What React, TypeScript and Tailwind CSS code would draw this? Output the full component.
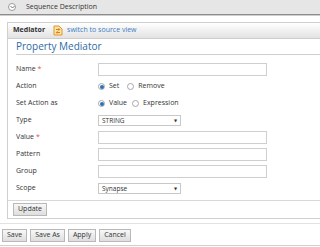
import React from 'react';

const font = { fontFamily: '"Open Sans", "DejaVu Sans", sans-serif' };

function Radio({ checked }: { checked?: boolean }) {
  return (
    <span className="inline-flex h-[7px] w-[7px] items-center justify-center rounded-full border border-[#a8a8a8] bg-white">
      {checked && <span className="h-[4px] w-[4px] rounded-full bg-[#2f6fb8]" />}
    </span>
  );
}

function SwitchIcon() {
  return (
    <svg width="10" height="11" viewBox="0 0 10 11">
      <path d="M1 1h5l3 3v6H1z" fill="#fbe6a8" stroke="#e0962a" strokeWidth="1" />
      <path d="M3 4.5h3.5M5.5 3.2l1.3 1.3-1.3 1.3" stroke="#e07a1a" strokeWidth="1" fill="none" />
      <path d="M7 7.5H3.5M4.5 6.2L3.2 7.5l1.3 1.3" stroke="#e07a1a" strokeWidth="1" fill="none" />
    </svg>
  );
}

function Row({ label, req, children }: { label: string; req?: boolean; children: React.ReactNode }) {
  return (
    <div className="flex h-[17px] items-center">
      <div className="w-[82px] text-[7px] text-[#333]">
        {label}
        {req && <span className="ml-[2px] text-[#e0504a]">*</span>}
      </div>
      {children}
    </div>
  );
}

function TextBox() {
  return <div className="h-[13px] w-[169px] border border-[#cfcfcf] bg-white" />;
}

function Select({ value }: { value: string }) {
  return (
    <div className="flex h-[11px] w-[83px] items-center justify-between border border-[#c8c8c8] bg-white pl-[3px] pr-[3px] text-[6.5px] text-[#333]">
      <span>{value}</span>
      <span className="text-[4px] leading-none">▼</span>
    </div>
  );
}

function Btn({ label }: { label: string }) {
  return (
    <div className="flex h-[13px] items-center border border-[#b8b8b8] bg-gradient-to-b from-[#f8f8f8] to-[#dedede] px-[4px] text-[7px] text-[#333]">
      {label}
    </div>
  );
}

export default function App() {
  return (
    <div className="h-[247px] w-[320px] overflow-hidden bg-white leading-normal" style={font}>
      <div className="flex h-[15px] items-center gap-[6px] border-b border-[#8c8c8c] bg-[#e7e6e6] pl-[8px] text-[7px] text-[#333]">
        <span className="flex h-[8px] w-[8px] items-center justify-center rounded-full border border-[#9a9a9a] bg-white">
          <svg width="5" height="4" viewBox="0 0 5 4">
            <path d="M0.5 1l2 2 2-2" stroke="#666" strokeWidth="0.9" fill="none" />
          </svg>
        </span>
        <span className="ml-[4px]">Sequence Description</span>
      </div>
      <div className="h-[1px] bg-[#cfcfcf]" />

      <div className="ml-[7px] mt-[6px] border-b border-l border-t border-[#d0d0d0]">
        <div className="flex h-[16px] items-center gap-[4px] border-b border-[#cdcdcd] bg-gradient-to-b from-white to-[#e2e2e2] pl-[5px] text-[7px]">
          <span className="font-bold text-[#333]">Mediator</span>
          <span className="ml-[4px] flex"><SwitchIcon /></span>
          <span className="text-[#3b7cc4]">switch to source view</span>
        </div>

        <div className="ml-[8px]">
          <div className="flex h-[16px] items-center border-b border-[#cfcfcf] text-[10px] text-[#2f6aa5]">
            Property Mediator
          </div>
          <div className="pt-[6px]">
            <Row label="Name" req><TextBox /></Row>
            <Row label="Action">
              <div className="flex items-center text-[7px] text-[#333]">
                <Radio checked />
                <span className="ml-[4px]">Set</span>
                <span className="ml-[8px] flex"><Radio /></span>
                <span className="ml-[4px]">Remove</span>
              </div>
            </Row>
            <Row label="Set Action as">
              <div className="flex items-center text-[7px] text-[#333]">
                <Radio checked />
                <span className="ml-[4px]">Value</span>
                <span className="ml-[5px] flex"><Radio /></span>
                <span className="ml-[4px]">Expression</span>
              </div>
            </Row>
            <Row label="Type"><Select value="STRING" /></Row>
            <Row label="Value" req><TextBox /></Row>
            <Row label="Pattern"><TextBox /></Row>
            <Row label="Group"><TextBox /></Row>
            <Row label="Scope"><Select value="Synapse" /></Row>
          </div>
        </div>
        <div className="mt-[3px] flex border-t border-[#d8d8d8] pb-[2px] pl-[5px] pt-[2px]">
          <Btn label="Update" />
        </div>
      </div>

      <div className="mt-[4px] border-t border-[#e2e2e2] pl-[2px] pt-[5px]">
        <div className="flex gap-[3px]">
          <Btn label="Save" />
          <Btn label="Save As" />
          <Btn label="Apply" />
          <Btn label="Cancel" />
        </div>
      </div>
      <div className="mt-[3px] h-[1px] bg-[#cfcfcf]" />
    </div>
  );
}
